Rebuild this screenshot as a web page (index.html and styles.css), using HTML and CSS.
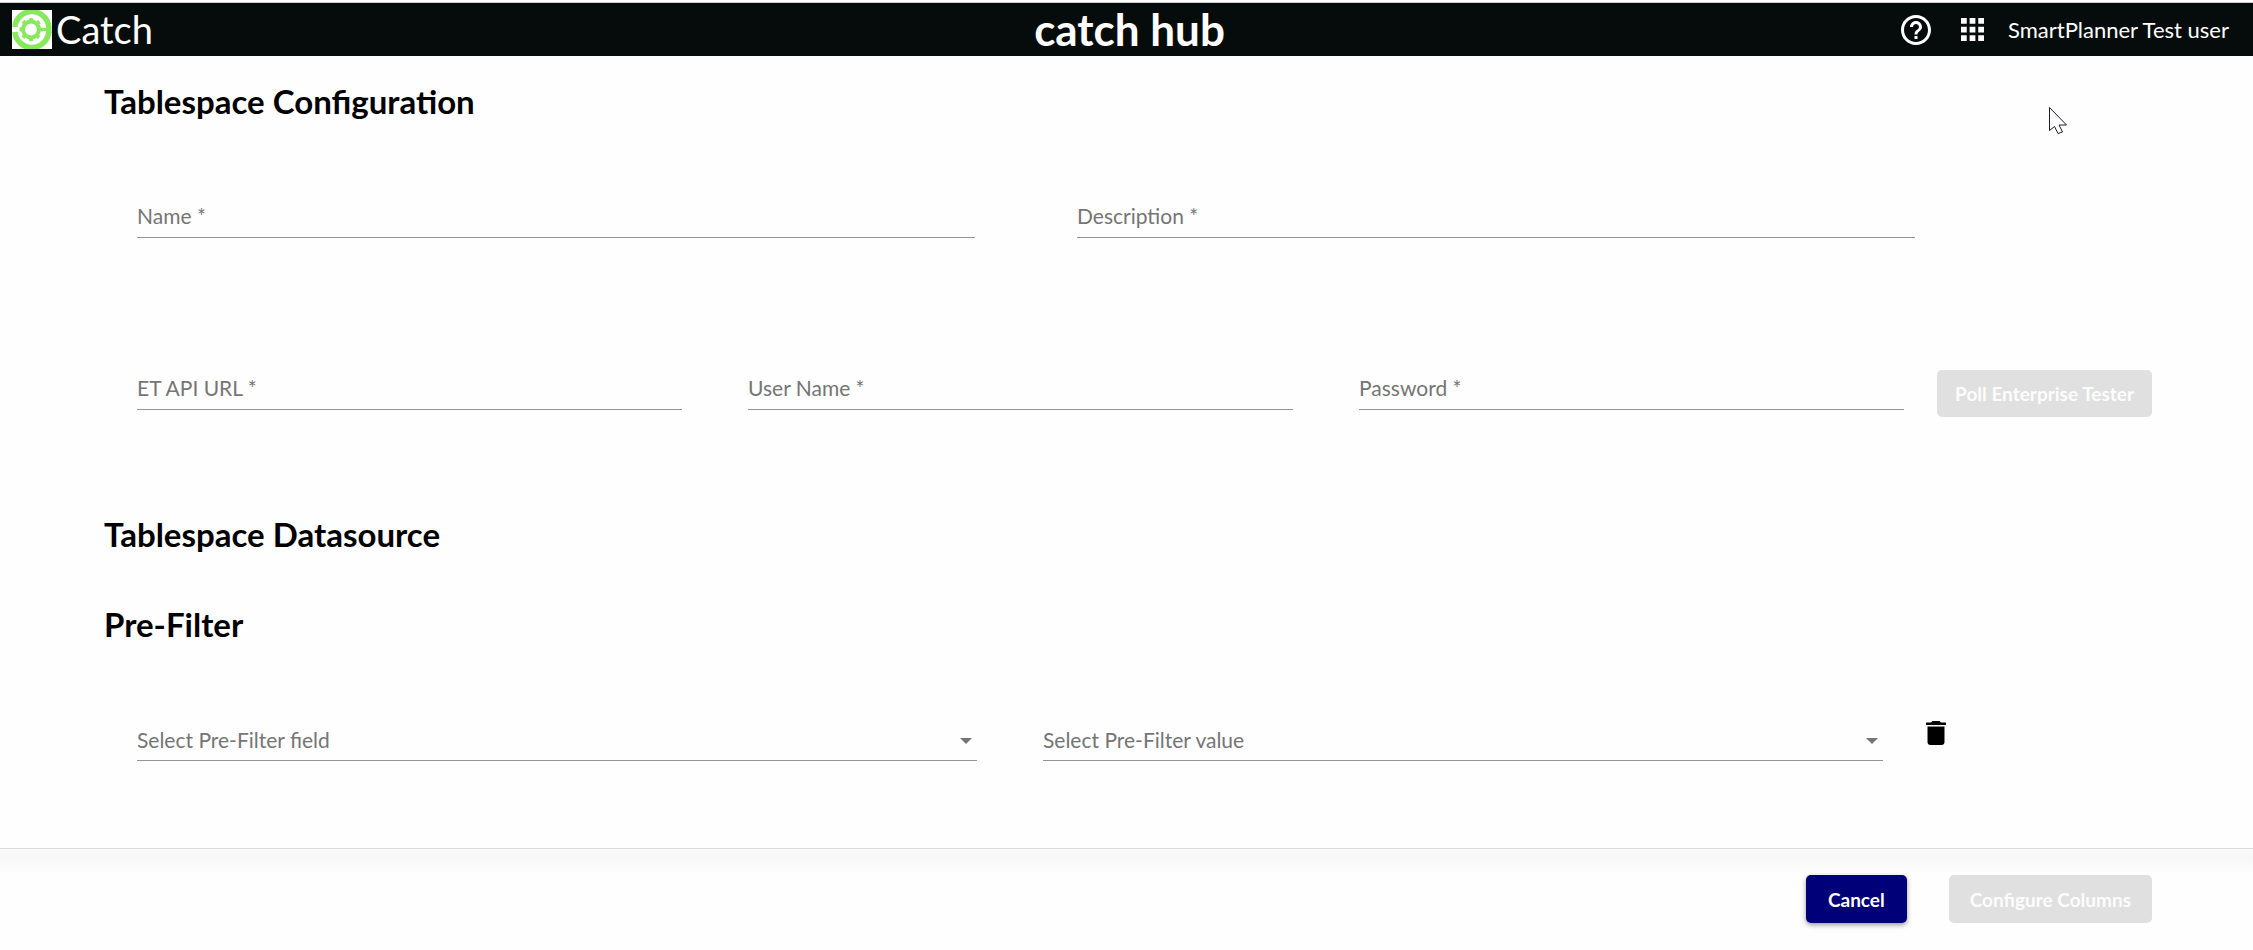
FILE: index.html
```html
<!DOCTYPE html>
<html lang="en">
<head>
<meta charset="utf-8">
<title>catch hub</title>
<link rel="stylesheet" href="styles.css">
</head>
<body>
<header class="topbar">
  <a class="brand" href="#">
    <svg class="logo" viewBox="0 0 40 39" aria-hidden="true">
      <rect width="40" height="39" fill="#fff"/>
      <g fill="none" stroke="#88e85c">
        <path d="M2.9 17 A17 17 0 0 1 36.8 17.500 M2.900 22 A17 17 0 0 0 36.800 21.500" stroke-width="5.500"/>
        <path d="M36.800 16V23" stroke-width="5.500"/>
        <path d="M28 19.500H37" stroke-width="3"/>
        <circle cx="19" cy="19.500" r="8" stroke-width="4"/>
        <circle cx="19" cy="19.500" r="10.500" stroke-width="2" stroke-dasharray="4.120 4.120" stroke-dashoffset="2.060"/>
      </g>
    </svg>
    <span>Catch</span>
  </a>
  <div class="product">catch hub</div>
  <div class="tools">
    <button class="icon-button" type="button" aria-label="Help">
      <svg class="help-icon" viewBox="2 2 20 20"><path fill="currentColor" d="M11 18h2v-2h-2v2zm1-16C6.480 2 2 6.480 2 12s4.480 10 10 10 10-4.480 10-10S17.520 2 12 2zm0 18c-4.410 0-8-3.590-8-8s3.590-8 8-8 8 3.590 8 8-3.590 8-8 8zm0-14c-2.210 0-4 1.790-4 4h2c0-1.100.9-2 2-2s2 .9 2 2c0 2-3 1.750-3 5h2c0-2.250 3-2.500 3-5 0-2.210-1.790-4-4-4z"/></svg>
    </button>
    <button class="icon-button" type="button" aria-label="Apps">
      <svg class="apps-icon" viewBox="4 4 16 16"><path fill="currentColor" d="M4 8h4V4H4v4zm6 12h4v-4h-4v4zm-6 0h4v-4H4v4zm0-6h4v-4H4v4zm6 0h4v-4h-4v4zm6-10v4h4V4h-4zm-6 4h4V4h-4v4zm6 6h4v-4h-4v4zm0 6h4v-4h-4v4z"/></svg>
    </button>
    <span class="user">SmartPlanner Test user</span>
  </div>
</header>

<main class="page">
  <h2 class="title">Tablespace Configuration</h2>
  <div class="row row-details">
    <div class="field"><label for="name">Name *</label><input id="name" type="text"></div>
    <div class="field"><label for="description">Description *</label><input id="description" type="text"></div>
  </div>
  <div class="row row-connection">
    <div class="field"><label for="url">ET API URL *</label><input id="url" type="text"></div>
    <div class="field"><label for="user">User Name *</label><input id="user" type="text"></div>
    <div class="field"><label for="password">Password *</label><input id="password" type="password"></div>
    <button class="button" type="button" disabled>Poll Enterprise Tester</button>
  </div>
  <h2 class="title">Tablespace Datasource</h2>
  <h2 class="title title-filter">Pre-Filter</h2>
  <div class="row row-filter">
    <div class="field">
      <label for="filter-field">Select Pre-Filter field</label>
      <select id="filter-field"><option value=""></option></select>
      <svg class="arrow" viewBox="0 0 12 6" aria-hidden="true"><path fill="currentColor" d="M0 0h12L6 6z"/></svg>
    </div>
    <div class="field">
      <label for="filter-value">Select Pre-Filter value</label>
      <select id="filter-value"><option value=""></option></select>
      <svg class="arrow" viewBox="0 0 12 6" aria-hidden="true"><path fill="currentColor" d="M0 0h12L6 6z"/></svg>
    </div>
    <button class="icon-button delete" type="button" aria-label="Delete filter">
      <svg class="trash-icon" viewBox="0 0 20 24" aria-hidden="true"><path fill="currentColor" d="M0 1.500h5l1.500-1.500h7L15 1.500h5V4H0zM1.500 5.500h17V21c0 1.800-1.200 3-3 3h-11c-1.800 0-3-1.200-3-3z"/></svg>
    </button>
  </div>
</main>

<footer class="actions">
  <button class="button button-primary" type="button">Cancel</button>
  <button class="button" type="button" disabled>Configure Columns</button>
</footer>

<svg class="cursor" viewBox="0 0 18 27" aria-hidden="true"><path fill="#fff" stroke="#1c1c28" d="M.5 .5V23.500L5.500 19.500L9 26.500L13.500 25L10 18H17.500z"/></svg>
</body>
</html>
```

FILE: styles.css
```css
* { box-sizing: border-box; }

body {
  margin: 0;
  background: #fefefe;
  color: #000;
  font-family: Lato, "Open Sans", sans-serif;
}

.topbar {
  display: grid;
  grid-template-columns: 1fr auto 1fr;
  align-items: center;
  height: 54px;
  margin-top: 2px;
  padding: 0 24px 0 30px;
  border-top: 1px solid #ccc;
  background: #060c0c;
  color: #fff;
}

.brand {
  display: flex;
  align-items: center;
  gap: 4px;
  margin-left: -18px;
  color: inherit;
  font-size: 38px;
  line-height: 40px;
  text-decoration: none;
}

.brand span { padding-bottom: 2px; }

.logo { width: 40px; height: 39px; }

.product { padding-bottom: 2px; font-size: 44px; font-weight: 700; line-height: 44px; }

.tools {
  display: flex;
  align-items: center;
  justify-content: flex-end;
  gap: 24px;
}

.user { font-size: 22px; }

.icon-button {
  display: flex;
  padding: 0;
  border: 0;
  background: none;
  color: inherit;
}

.help-icon { width: 30px; height: 30px; margin-right: 6px; }
.apps-icon { width: 23px; height: 23px; }
.trash-icon { width: 20px; height: 24px; }

.page { padding: 25px 101px 87px 104px; }

.title {
  margin: 0;
  font-size: 33px;
  font-weight: 700;
  line-height: 40px;
}

.title-filter { margin-top: 50px; }

.row { display: grid; padding-left: 33px; }

.row-details {
  grid-template-columns: 1fr 1fr;
  gap: 102px;
  margin: 77px 237px 132px 0;
}

.row-connection {
  grid-template-columns: 1fr 1fr 1fr auto;
  gap: 66px;
  margin-bottom: 97px;
}

.row-connection .button { margin-left: -33px; padding: 0 18px; }

.row-filter {
  grid-template-columns: 1fr 1fr auto;
  gap: 66px;
  margin: 77px 203px 0 0;
}

.field {
  display: grid;
  align-items: center;
  height: 40px;
  border-bottom: 1px solid #949494;
  color: #757575;
}

.field > * { grid-area: 1 / 1; }

.field label { padding-bottom: 4px; font-size: 21px; line-height: 24px; }

.row-filter label { padding-bottom: 2px; }

.field input,
.field select {
  width: 100%;
  height: 39px;
  padding: 0;
  border: 0;
  outline: 0;
  appearance: none;
  background: none;
  font: inherit;
  font-size: 21px;
}

.arrow {
  justify-self: end;
  width: 12px;
  height: 6px;
  margin-right: 5px;
}

.delete { align-self: start; margin-left: -23px; }

.button {
  height: 47px;
  padding: 0 21px;
  border: 0;
  border-radius: 5px;
  background: #e0e0e0;
  color: #fcfcfc;
  font-family: inherit;
  font-size: 19px;
  font-weight: 700;
}

.button-primary {
  padding: 0 22px;
  background: #000078;
  color: #fff;
  box-shadow: 0 2px 5px rgba(0, 0, 0, .4);
}

.actions {
  display: flex;
  justify-content: flex-end;
  gap: 42px;
  padding: 26px 101px 26px 0;
  border-top: 1px solid #dcdcdc;
  background: linear-gradient(#fafafa, #f7f7f7 8px, #fefefe 24px);
}

.actions .button { height: 48px; }

.cursor {
  position: absolute;
  top: 107px;
  right: 186px;
  width: 18px;
  height: 27px;
}
```
